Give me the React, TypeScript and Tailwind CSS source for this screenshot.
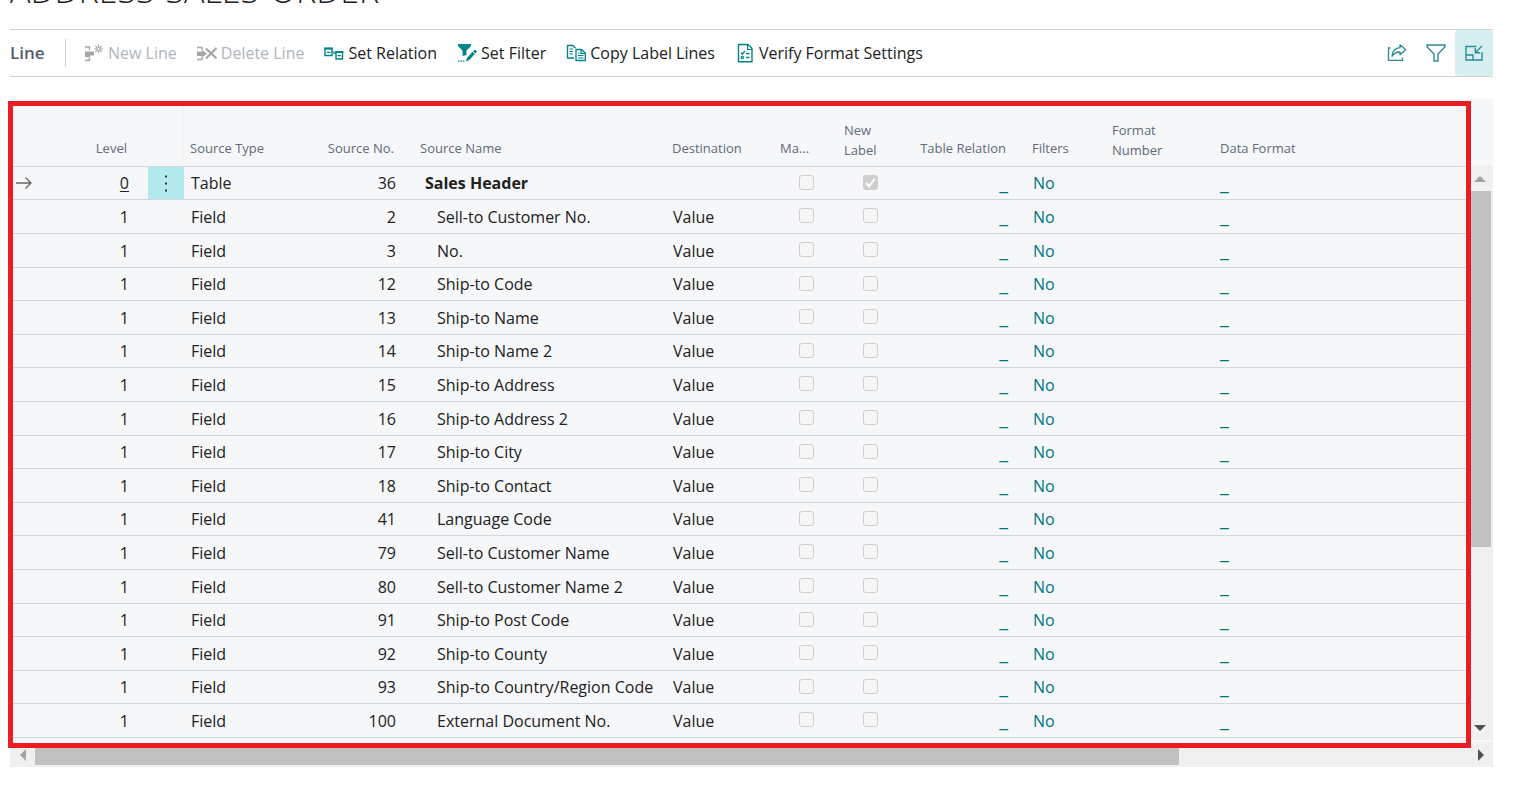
import type { ReactNode } from "react";

type Row = { level: number; type: string; no: number; name: string; header?: boolean };

const rows: Row[] = [
  { level: 0, type: "Table", no: 36, name: "Sales Header", header: true },
  { level: 1, type: "Field", no: 2, name: "Sell-to Customer No." },
  { level: 1, type: "Field", no: 3, name: "No." },
  { level: 1, type: "Field", no: 12, name: "Ship-to Code" },
  { level: 1, type: "Field", no: 13, name: "Ship-to Name" },
  { level: 1, type: "Field", no: 14, name: "Ship-to Name 2" },
  { level: 1, type: "Field", no: 15, name: "Ship-to Address" },
  { level: 1, type: "Field", no: 16, name: "Ship-to Address 2" },
  { level: 1, type: "Field", no: 17, name: "Ship-to City" },
  { level: 1, type: "Field", no: 18, name: "Ship-to Contact" },
  { level: 1, type: "Field", no: 41, name: "Language Code" },
  { level: 1, type: "Field", no: 79, name: "Sell-to Customer Name" },
  { level: 1, type: "Field", no: 80, name: "Sell-to Customer Name 2" },
  { level: 1, type: "Field", no: 91, name: "Ship-to Post Code" },
  { level: 1, type: "Field", no: 92, name: "Ship-to County" },
  { level: 1, type: "Field", no: 93, name: "Ship-to Country/Region Code" },
  { level: 1, type: "Field", no: 100, name: "External Document No." },
];

const iconBox = "h-5 w-5 shrink-0";

function NewLineIcon() {
  return (
    <svg className={iconBox} viewBox="0 0 20 20" fill="none" stroke="#a6a6a6" aria-hidden="true">
      <path d="M1 4h4.5v3M1 17.5h4.5v-3" strokeWidth="1.5" />
      <path d="M1 8.500h9v4H6v1.500H1z" fill="#a6a6a6" stroke="none" />
      <path d="M14.500 1.500v9M10 6h9M11.300 2.800l1.700 1.700M16 7.500l1.700 1.700M17.700 2.800L16 4.500M13 7.500l-1.700 1.700" strokeWidth="1.200" />
      <circle cx="14.500" cy="6" r="1.700" fill="#fff" strokeWidth="1" />
    </svg>
  );
}

function DeleteLineIcon() {
  return (
    <svg className={iconBox} viewBox="0 0 20 20" fill="none" stroke="#a6a6a6" aria-hidden="true">
      <path d="M0 4.500h5v2.500M0 16.500h5v-2.500" strokeWidth="1.500" />
      <path d="M0 8.500h5V7l5 3.700-5 3.800V13H0z" fill="#a6a6a6" stroke="none" />
      <path d="M9 5.500l10.500 10M19.500 5L9 15.500" strokeWidth="2.200" />
    </svg>
  );
}

function RelationIcon() {
  return (
    <svg className={iconBox} viewBox="0 0 20 20" fill="none" stroke="#00838a" aria-hidden="true">
      <path d="M1 5.500h7v7H1zM12 9h6.500v7H12z" strokeWidth="1.400" />
      <path d="M0.300 5.500h8.400M11.300 9h8" strokeWidth="2" />
      <path d="M2.800 9.300h3.500M13.500 12.700h3.500M8.500 8.500l3 2.500" strokeWidth="1.300" />
    </svg>
  );
}

function SetFilterIcon() {
  return (
    <svg className={iconBox} viewBox="0 0 20 20" fill="#00838a" aria-hidden="true">
      <path d="M1 1h13v2L9.500 7.500V12L5.500 13V7.500L1 3z" />
      <path d="M17.700 6.500L20 8.700l-1.600 1.700-2.300-2.200zM15.500 8.800l2.300 2.200-5.500 6-3.300 1.500 1-3.500z" />
      <path d="M1 17.500h1.500v1.300H1zM3.500 17.500H5v1.300H3.500zM6 17.500h1.500v1.300H6z" />
    </svg>
  );
}

function CopyIcon() {
  return (
    <svg className={iconBox} viewBox="0 0 20 20" fill="none" stroke="#00838a" aria-hidden="true">
      <path d="M8 15H1.500V2.500h5.500L9.500 5" strokeWidth="1.300" />
      <path d="M3.500 6H7M3.500 8.500H7M3.500 11H7" strokeWidth="1.200" />
      <path d="M10 6.500h5.500L19.300 10v7.500H10z" strokeWidth="1.300" />
      <path d="M15 6.500v3.800h4M12 10h1.500M12 12.500h5.500M12 15h5.500" strokeWidth="1.200" />
    </svg>
  );
}

function VerifyIcon() {
  return (
    <svg className={iconBox} viewBox="0 0 20 20" fill="none" stroke="#00838a" aria-hidden="true">
      <path d="M3.500 1.500h9.500l4 4v13.300H3.500z" strokeWidth="1.400" />
      <path d="M12.500 1.500V6.500H17" strokeWidth="1.200" />
      <path d="M6 9.800l1.300 1.400L10 8M11 10.500h3.500M11 14.500h3.500" strokeWidth="1.300" />
      <circle cx="7.300" cy="14.500" r="1.200" strokeWidth="1.200" />
    </svg>
  );
}

function ShareIcon() {
  return (
    <svg className={iconBox} viewBox="0 0 20 20" fill="none" stroke="#2b8c92" strokeWidth="1.300" aria-hidden="true">
      <path d="M3.500 5H1.500v12.300H15.500V14.500" />
      <path d="M13 1.800l5.700 5-5.700 5V9c-3.500-.2-5.800 1-8 4.300C5.300 8.500 8 5 13 4.700z" strokeLinejoin="round" />
    </svg>
  );
}

function FilterIcon() {
  return (
    <svg className={iconBox} viewBox="0 0 20 20" fill="none" stroke="#2b8c92" strokeWidth="1.400" aria-hidden="true">
      <path d="M1 2h18v1.700l-7 7.300v7H8v-7L1 3.700z" />
    </svg>
  );
}

function CollapseIcon() {
  return (
    <svg className={iconBox} viewBox="0 0 20 20" fill="none" stroke="#2b8c92" strokeWidth="1.400" aria-hidden="true">
      <path d="M12.500 3.500H2v13.500h16V9" />
      <path d="M2 12h7v5" />
      <path d="M18 3l-6.500 6.500M11.300 5v4.700H16" />
    </svg>
  );
}

function Action({ icon, label, disabled }: { icon: ReactNode; label: string; disabled?: boolean }) {
  return (
    <button
      type="button"
      disabled={disabled}
      className="flex items-center gap-1 whitespace-nowrap text-[#212121] disabled:text-[#b0b5be]"
    >
      {icon}
      {label}
    </button>
  );
}

function Check({ label, checked }: { label: string; checked?: boolean }) {
  return (
    <span className="relative block size-[15px]">
      <input
        type="checkbox"
        aria-label={label}
        defaultChecked={checked}
        disabled
        className="block size-[15px] appearance-none rounded-[3px] border border-[#cfcfcf] bg-[#f6f6f7] checked:bg-[#cfcfcf]"
      />
      {checked && (
        <svg className="absolute inset-0 size-[15px]" viewBox="0 0 16 16" fill="none" stroke="#fff" strokeWidth="2.200" aria-hidden="true">
          <path d="M3.500 8.500l3 3.500 6-8" />
        </svg>
      )}
    </span>
  );
}

const td = "border-b border-[#d3d6da] p-0";
const th = "border-b border-[#d3d6da] p-0 align-bottom font-normal";

export default function App() {
  return (
    <main className="min-h-screen bg-white pr-[41px] pl-2.5 font-['Open_Sans','Noto_Sans',sans-serif] text-base text-[#212121]">
      <div className="flex h-[29px] items-start overflow-hidden">
        <h1 className="-mt-[30px] text-[34px] leading-10 font-light whitespace-nowrap">ADDRESS-SALES-ORDER</h1>
      </div>

      <div className="flex h-12 items-center border-y border-[#d0d2d4]">
        <h2 className="w-[55px] text-[17px] font-semibold text-[#505c6d]">Line</h2>
        <div className="mr-[18px] h-7 w-px bg-[#d0d2d4]" />
        <div className="flex items-center gap-5" role="toolbar" aria-label="Line actions">
          <Action icon={<NewLineIcon />} label="New Line" disabled />
          <Action icon={<DeleteLineIcon />} label="Delete Line" disabled />
          <Action icon={<RelationIcon />} label="Set Relation" />
          <Action icon={<SetFilterIcon />} label="Set Filter" />
          <Action icon={<CopyIcon />} label="Copy Label Lines" />
          <Action icon={<VerifyIcon />} label="Verify Format Settings" />
        </div>
        <div className="ml-auto flex h-full items-center">
          <button type="button" aria-label="Share" className="flex h-full w-10 items-center justify-center"><ShareIcon /></button>
          <button type="button" aria-label="Filter" className="flex h-full w-[38px] items-center justify-center"><FilterIcon /></button>
          <button type="button" aria-label="Collapse" className="flex h-full w-[38px] items-center justify-center rounded-[3px] bg-[#d8eff1]"><CollapseIcon /></button>
        </div>
      </div>

      <section className="mt-[22px]" aria-label="Lines">
        <div className="flex">
          <div className="relative min-w-0 flex-1 bg-[#f6f7f9] pb-2.5">
            <table className="w-full table-fixed border-separate border-spacing-0 text-left whitespace-nowrap">
              <colgroup>
                <col className="w-[50px]" />
                <col className="w-[88px]" />
                <col className="w-9" />
                <col className="w-[100px]" />
                <col className="w-[116px]" />
                <col className="w-[268px]" />
                <col className="w-[100px]" />
                <col className="w-16" />
                <col className="w-16" />
                <col className="w-[116px]" />
                <col className="w-[88px]" />
                <col className="w-[108px]" />
                <col />
              </colgroup>
              <thead>
                <tr className="h-[68px] text-[13px] leading-5 text-[#606b7b]">
                  <th className={th} aria-label="Selected" />
                  <th className={`${th} pr-[21px] pb-2 text-right`}>Level</th>
                  <th className={`${th} border-r border-r-[#eff1f3]`} aria-label="Row menu" />
                  <th className={`${th} pb-2 pl-1.5`}>Source Type</th>
                  <th className={`${th} pr-1.5 pb-2 text-right`}>Source No.</th>
                  <th className={`${th} pb-2 pl-5`}>Source Name</th>
                  <th className={`${th} pb-2 pl-1`}>Destination</th>
                  <th className={`${th} pb-2 pl-3`}>Ma...</th>
                  <th className={`${th} pb-1.5 pl-3`}>New<br />Label</th>
                  <th className={`${th} pr-1.5 pb-2 text-right`}>Table Relation</th>
                  <th className={`${th} pb-2 pl-5`}>Filters</th>
                  <th className={`${th} pb-1.5 pl-3`}>Format<br />Number</th>
                  <th className={`${th} pb-2 pl-3`}>Data Format</th>
                </tr>
              </thead>
              <tbody>
                {rows.map((r) => (
                  <tr key={r.no} className="h-[34px] leading-6 nth-[5n+1]:h-[33px] nth-[5n+4]:h-[33px]">
                    <td className={`${td} pl-1.5`}>
                      {r.header && (
                        <svg className="h-4 w-4" viewBox="0 0 16 16" fill="none" stroke="#666" strokeWidth="1.300" aria-hidden="true">
                          <path d="M0 8h15M9.500 2.500L15 8l-5.500 5.500" />
                        </svg>
                      )}
                    </td>
                    <td className={`${td} pr-[19px] text-right`}>
                      {r.header ? <a href="#level" className="underline underline-offset-2">{r.level}</a> : r.level}
                    </td>
                    <td className={r.header ? `${td} bg-[#b2eaed]` : td}>
                      {r.header && (
                        <button type="button" aria-label="Show more options" className="flex h-8 w-full items-center justify-center">
                          <svg className="h-5 w-1" viewBox="0 0 4 20" fill="#333" aria-hidden="true">
                            <path d="M1 2.500h2v2H1zM1 9.500h2v2H1zM1 16.500h2v2H1z" />
                          </svg>
                        </button>
                      )}
                    </td>
                    <td className={`${td} pl-[7px]`}>{r.type}</td>
                    <td className={`${td} pr-1 text-right`}>{r.no}</td>
                    <td className={r.header ? `${td} pl-[25px] font-bold` : `${td} pl-[37px]`}>{r.name}</td>
                    <td className={`${td} pl-[5px]`}>{r.header ? "" : "Value"}</td>
                    <td className={`${td} pb-0.5 pl-[31px]`}><Check label={`Mandatory ${r.name}`} /></td>
                    <td className={`${td} pb-0.5 pl-[31px]`}><Check label={`New label ${r.name}`} checked={r.header} /></td>
                    <td className={`${td} pr-1 text-right`}><a href="#relation" className="text-[20px] text-[#00757d]">_</a></td>
                    <td className={`${td} pl-[21px]`}><a href="#filters" className="text-[#00757d]">No</a></td>
                    <td className={td} />
                    <td className={`${td} pl-3`}><a href="#format" className="text-[20px] text-[#00757d]">_</a></td>
                  </tr>
                ))}
              </tbody>
            </table>
            <div className="pointer-events-none absolute top-0.5 right-0 bottom-0 -left-0.5 border-[5px] border-[#ed1c24]" />
          </div>

          <div className="flex w-[22px] flex-col bg-[#f0f0f0]">
            <div className="h-[67px] bg-[#f6f7f9]" />
            <button type="button" aria-label="Scroll up" className="flex h-[25px] items-center justify-center pr-1">
              <svg className="h-1.5 w-3" viewBox="0 0 12 6" fill="#a3a3a3" aria-hidden="true"><path d="M6 0l6 6H0z" /></svg>
            </button>
            <div className="flex flex-1 flex-col pr-0.5">
              <div className="h-[68%] bg-[#c1c1c1]" />
            </div>
            <button type="button" aria-label="Scroll down" className="flex h-[25px] items-center justify-center pr-1">
              <svg className="h-1.5 w-3" viewBox="0 0 12 6" fill="#505050" aria-hidden="true"><path d="M0 0h12L6 6z" /></svg>
            </button>
            <div className="mb-1.5 h-0.5 bg-[#f8f8f8]" />
          </div>
        </div>

        <div className="flex h-[19px] bg-[#f0f0f0] pb-0.5">
          <button type="button" aria-label="Scroll left" className="flex w-[25px] items-start justify-center pt-px">
            <svg className="h-3 w-1.5" viewBox="0 0 6 12" fill="#a3a3a3" aria-hidden="true"><path d="M6 0v12L0 6z" /></svg>
          </button>
          <div className="flex flex-1">
            <div className="w-[79.8%] bg-[#c1c1c1]" />
          </div>
          <button type="button" aria-label="Scroll right" className="flex w-[25px] items-start justify-center pt-px">
            <svg className="h-3 w-1.5" viewBox="0 0 6 12" fill="#505050" aria-hidden="true"><path d="M0 0l6 6-6 6z" /></svg>
          </button>
        </div>
      </section>
    </main>
  );
}
